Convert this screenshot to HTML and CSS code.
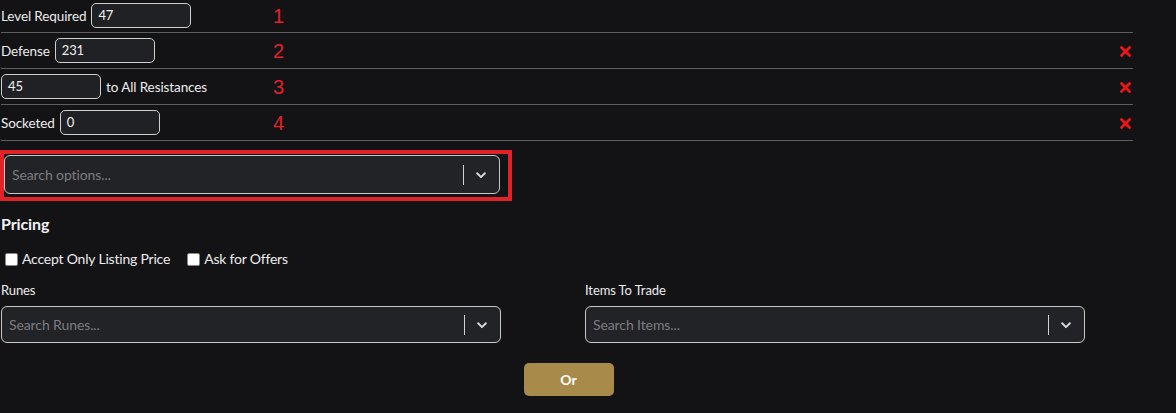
FILE: index.html
```html
<!DOCTYPE html>
<html>
<head>
<meta charset="utf-8">
<link rel="stylesheet" href="styles.css">
</head>
<body>
<div class="page">
  <div class="props">
    <div class="prop">
      <div class="prop-main"><span class="lbl">Level Required</span><span class="field">47</span></div>
      <span class="num">1</span>
    </div>
    <div class="prop">
      <div class="prop-main"><span class="lbl">Defense</span><span class="field">231</span></div>
      <span class="num">2</span>
      <svg class="del" width="11" height="11" viewBox="0 0 11 11"><path d="M1.5 1.5 L9.5 9.5 M9.5 1.5 L1.5 9.5" stroke="#ee1515" stroke-width="2.8" stroke-linecap="round"/></svg>
    </div>
    <div class="prop">
      <div class="prop-main"><span class="field">45</span><span class="lbl">to All Resistances</span></div>
      <span class="num">3</span>
      <svg class="del" width="11" height="11" viewBox="0 0 11 11"><path d="M1.5 1.5 L9.5 9.5 M9.5 1.5 L1.5 9.5" stroke="#ee1515" stroke-width="2.8" stroke-linecap="round"/></svg>
    </div>
    <div class="prop">
      <div class="prop-main"><span class="lbl">Socketed</span><span class="field">0</span></div>
      <span class="num">4</span>
      <svg class="del" width="11" height="11" viewBox="0 0 11 11"><path d="M1.5 1.5 L9.5 9.5 M9.5 1.5 L1.5 9.5" stroke="#ee1515" stroke-width="2.8" stroke-linecap="round"/></svg>
    </div>
  </div>

  <div class="highlight">
    <div class="select">
      <span class="ph">Search options...</span>
      <span class="sep"></span>
      <svg class="chev" width="14" height="14" viewBox="0 0 20 20"><path d="M4.5 7.5 L10 13 L15.5 7.5" fill="none" stroke="#d8d8d8" stroke-width="2.8" stroke-linecap="round" stroke-linejoin="round"/></svg>
    </div>
  </div>

  <h3 class="heading">Pricing</h3>
  <div class="checks">
    <label class="check"><span class="box"></span>Accept Only Listing Price</label>
    <label class="check"><span class="box"></span>Ask for Offers</label>
  </div>

  <div class="trade">
    <div class="col">
      <div class="col-lbl">Runes</div>
      <div class="select tall">
        <span class="ph">Search Runes...</span>
        <span class="sep"></span>
        <svg class="chev" width="14" height="14" viewBox="0 0 20 20"><path d="M4.5 7.5 L10 13 L15.5 7.5" fill="none" stroke="#d8d8d8" stroke-width="2.8" stroke-linecap="round" stroke-linejoin="round"/></svg>
      </div>
    </div>
    <div class="col">
      <div class="col-lbl">Items To Trade</div>
      <div class="select tall">
        <span class="ph">Search Items...</span>
        <span class="sep"></span>
        <svg class="chev" width="14" height="14" viewBox="0 0 20 20"><path d="M4.5 7.5 L10 13 L15.5 7.5" fill="none" stroke="#d8d8d8" stroke-width="2.8" stroke-linecap="round" stroke-linejoin="round"/></svg>
      </div>
    </div>
  </div>

  <div class="actions">
    <button class="or">Or</button>
  </div>
</div>
</body>
</html>
```
FILE: styles.css
```css
html, body {
  margin: 0;
  padding: 0;
  background: #131316;
}
body {
  font-family: Lato, "Noto Sans", sans-serif;
  font-size: 13px;
  letter-spacing: -0.1px;
  color: #ececec;
  width: 1176px;
  height: 413px;
  overflow: hidden;
}
.page {
  padding: 0 0 0 1px;
}
.props {
  width: 1132px;
}
.prop {
  height: 35px;
  border-bottom: 1px solid #5e5e62;
  display: flex;
  align-items: center;
  position: relative;
}
.prop:first-child {
  height: 31px;
  padding-bottom: 1px;
}
.prop-main {
  display: flex;
  align-items: center;
  gap: 5px;
  width: 272px;
}
.lbl {
  font-size: 13.5px;
}
.field {
  box-sizing: border-box;
  width: 100px;
  height: 25px;
  border: 1px solid #cfcfcf;
  border-radius: 5px;
  background: #202124;
  padding: 3px 6px;
  line-height: 17px;
  color: #f0f0f0;
}
.num {
  color: #e0222b;
  font-family: "Liberation Sans", Arial, sans-serif;
  font-size: 20px;
  margin-top: 2px;
  width: 20px;
}
.del {
  position: absolute;
  right: 2px;
  top: 50%;
  margin-top: -5px;
}
.highlight {
  margin-top: 9px;
  margin-left: -1px;
  width: 512px;
  height: 51px;
  box-sizing: border-box;
  border: 4px solid #e0222b;
  padding: 1px 8px 0 0;
  background: #131316;
}
.select {
  box-sizing: border-box;
  height: 39px;
  border: 1px solid #c8c8c8;
  border-radius: 6px;
  background: #222326;
  display: flex;
  align-items: center;
  padding-left: 7px;
}
.select .ph {
  flex: 1;
  color: #7d7d80;
  font-size: 14px;
}
.select .sep {
  width: 1px;
  height: 20px;
  background: #d0d0d0;
}
.select .chev {
  margin: 0 11px 0 10px;
}
.select.tall {
  height: 37px;
}
.heading {
  margin: 13px 0 0 0;
  font-size: 16px;
  font-weight: 700;
  line-height: 20px;
  color: #f2f2f2;
}
.checks {
  display: flex;
  gap: 17px;
  margin-top: 16px;
  padding-left: 4px;
}
.check {
  display: flex;
  align-items: center;
  gap: 4px;
  font-size: 14px;
  line-height: 18px;
  letter-spacing: -0.2px;
}
.box {
  width: 11px;
  height: 11px;
  background: #fff;
  border: 1px solid #888;
  border-radius: 2px;
}
.trade {
  display: flex;
  gap: 84px;
  margin-top: 14px;
}
.col {
  width: 500px;
}
.col-lbl {
  font-size: 13px;
  line-height: 16px;
  margin-bottom: 8px;
}
.actions {
  display: flex;
  justify-content: center;
  margin-top: 20px;
  padding-right: 40px;
}
.or {
  width: 90px;
  height: 33px;
  border: none;
  border-radius: 5px;
  background: #a88b4a;
  color: #fff;
  font-family: Lato, sans-serif;
  font-weight: 700;
  font-size: 14px;
}
```
